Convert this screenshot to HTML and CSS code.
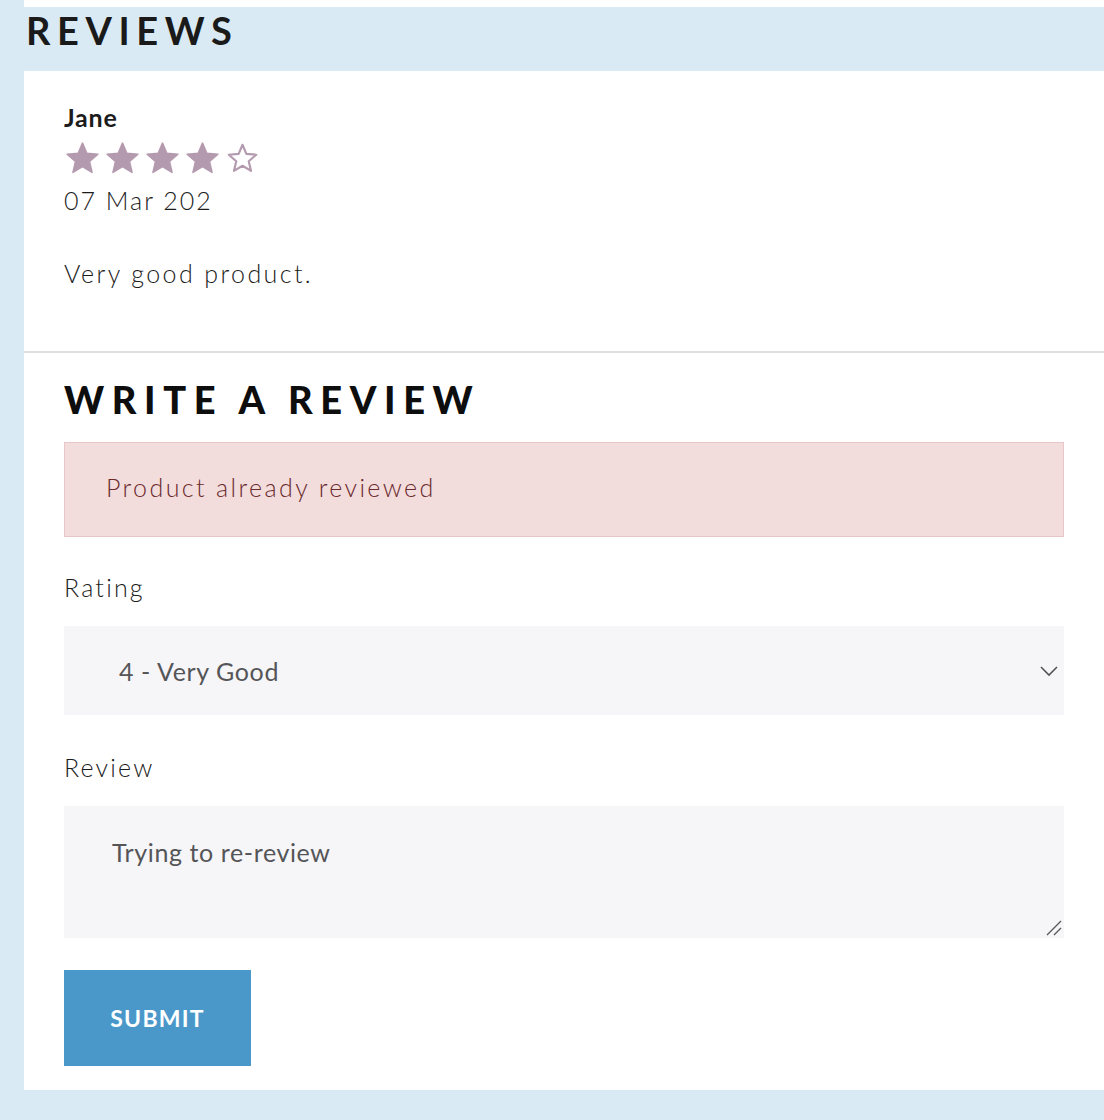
FILE: index.html
```html
<!DOCTYPE html>
<html lang="en">
<head>
<meta charset="utf-8">
<title>Reviews</title>
<link rel="stylesheet" href="styles.css">
</head>
<body>
<div class="page">
  <header class="band">
    <h2 class="band-title">REVIEWS</h2>
  </header>
  <section class="review">
    <div class="review-name">Jane</div>
    <div class="stars">
      <svg class="star" viewBox="0 0 24 24"><path class="fill" d="M12 17.27L18.18 21l-1.64-7.03L22 9.24l-7.19-.61L12 2 9.19 8.63 2 9.24l5.46 4.73L5.82 21z"/></svg>
      <svg class="star" viewBox="0 0 24 24"><path class="fill" d="M12 17.27L18.18 21l-1.64-7.03L22 9.24l-7.19-.61L12 2 9.19 8.63 2 9.24l5.46 4.73L5.82 21z"/></svg>
      <svg class="star" viewBox="0 0 24 24"><path class="fill" d="M12 17.27L18.18 21l-1.64-7.03L22 9.24l-7.19-.61L12 2 9.19 8.63 2 9.24l5.46 4.73L5.82 21z"/></svg>
      <svg class="star" viewBox="0 0 24 24"><path class="fill" d="M12 17.27L18.18 21l-1.64-7.03L22 9.24l-7.19-.61L12 2 9.19 8.63 2 9.24l5.46 4.73L5.82 21z"/></svg>
      <svg class="star" viewBox="0 0 24 24"><path class="empty" d="M12 16.7l5.5 3.3-1.46-6.25L20.9 9.55l-6.4-.55L12 3.1 9.5 9l-6.4.55 4.86 4.2L6.5 20z"/></svg>
    </div>
    <div class="review-date">07 Mar 202</div>
    <p class="review-text">Very good product.</p>
  </section>
  <section class="write">
    <h2 class="write-title">WRITE A REVIEW</h2>
    <div class="alert">Product already reviewed</div>
    <label class="field-label" for="rating">Rating</label>
    <div class="select-wrap">
      <select id="rating" class="select">
        <option>4 - Very Good</option>
      </select>
      <svg class="chevron" viewBox="0 0 18 11"><path d="M1 1l8 8 8-8"/></svg>
    </div>
    <label class="field-label review-label" for="comment">Review</label>
    <div class="textarea-wrap">
      <textarea id="comment" class="textarea">Trying to re-review</textarea>
      <svg class="grip" viewBox="0 0 18 18"><path d="M2 16L16 2M9 16l7-7"/></svg>
    </div>
    <button class="submit" type="button">SUBMIT</button>
  </section>
</div>
</body>
</html>
```
FILE: styles.css
```css
* { box-sizing: border-box; }
html, body { margin: 0; padding: 0; }
body {
  background: #d9eaf4;
  font-family: "Lato", "Open Sans", sans-serif;
  color: #1c1c1c;
}
.page {
  margin-left: 24px;
  background: #ffffff;
  padding-top: 7px;
  padding-bottom: 24px;
}
.band {
  background: #d9eaf4;
  height: 64px;
  margin-left: -24px;
  padding-left: 26px;
}
.band-title {
  margin: 0;
  font-size: 38px;
  line-height: 47px;
  font-weight: 700;
  letter-spacing: 6.6px;
  color: #1a1a1a;
}
.review {
  padding: 31px 40px 63px;
  border-bottom: 2px solid #dedede;
}
.review-name {
  font-size: 25px;
  line-height: 30px;
  font-weight: 700;
  letter-spacing: 0.8px;
}
.stars {
  display: flex;
  gap: 3px;
  margin-top: 8px;
  height: 37px;
}
.star { width: 37px; height: 37px; display: block; }
.star .fill { fill: #b49aae; stroke: #b49aae; stroke-width: 1; stroke-linejoin: round; }
.star .empty { fill: none; stroke: #b49aae; stroke-width: 1.4; stroke-linejoin: round; }
.review-date {
  margin-top: 8px;
  font-size: 25px;
  line-height: 30px;
  font-weight: 300;
  letter-spacing: 2px;
}
.review-text {
  margin: 43px 0 0;
  font-size: 25px;
  line-height: 30px;
  font-weight: 300;
  letter-spacing: 2.4px;
}
.write {
  padding: 23px 40px 0;
}
.write-title {
  margin: 0;
  font-size: 38px;
  line-height: 46px;
  font-weight: 900;
  letter-spacing: 7.6px;
  color: #0d0d0d;
}
.alert {
  margin-top: 20px;
  background: #f2dcdc;
  border: 1px solid #eac7c7;
  padding: 29px 40px 34px 41px;
  font-size: 25px;
  line-height: 30px;
  font-weight: 300;
  letter-spacing: 2.4px;
  color: #6b2a2c;
}
.field-label {
  display: block;
  margin-top: 35px;
  font-size: 25px;
  line-height: 30px;
  font-weight: 300;
  letter-spacing: 2.2px;
  color: #1c1c1c;
}
.select-wrap {
  position: relative;
  margin-top: 24px;
}
.select {
  display: block;
  width: 100%;
  height: 89px;
  -webkit-appearance: none;
  appearance: none;
  border: none;
  border-radius: 0;
  background: #f6f6f8;
  padding: 0 60px 0 55px;
  font-family: "Lato", "Open Sans", sans-serif;
  font-size: 25px;
  font-weight: 400;
  letter-spacing: 0.6px;
  color: #555558;
  outline: none;
}
.chevron {
  position: absolute;
  right: 6px;
  top: 40px;
  width: 18px;
  height: 11px;
  fill: none;
  stroke: #555558;
  stroke-width: 1.6;
}
.review-label { margin-top: 37px; }
.textarea-wrap {
  position: relative;
  margin-top: 24px;
}
.textarea {
  display: block;
  width: 100%;
  height: 132px;
  border: none;
  border-radius: 0;
  background: #f6f6f8;
  padding: 31px 48px;
  font-family: "Lato", "Open Sans", sans-serif;
  font-size: 25px;
  line-height: 30px;
  letter-spacing: 0.6px;
  color: #555558;
  outline: none;
  resize: none;
}
.grip {
  position: absolute;
  right: 1px;
  bottom: 1px;
  width: 18px;
  height: 18px;
  fill: none;
  stroke: #5a5a5a;
  stroke-width: 1.4;
}
.submit {
  display: block;
  margin-top: 32px;
  width: 187px;
  height: 96px;
  border: none;
  border-radius: 0;
  background: #4a98ca;
  color: #ffffff;
  font-family: "Lato", "Open Sans", sans-serif;
  font-size: 23px;
  font-weight: 700;
  letter-spacing: 1.2px;
  padding: 0;
}
```
